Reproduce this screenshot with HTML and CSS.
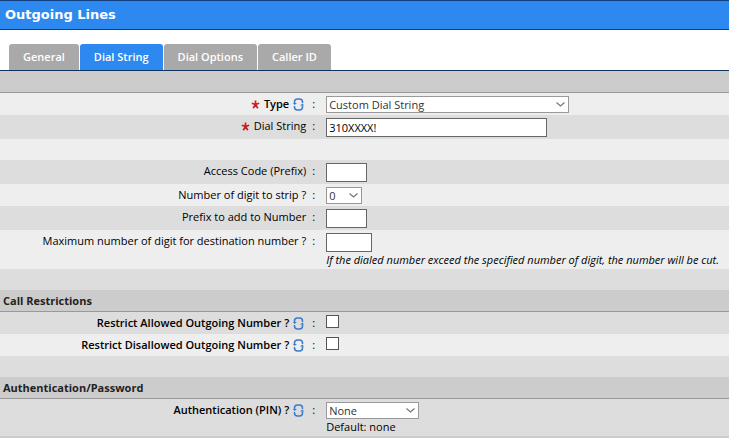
FILE: index.html
```html
<!DOCTYPE html>
<html lang="en">

<head>
  <meta charset="UTF-8">
  <title>Outgoing Lines</title>
  <link rel="stylesheet" href="styles.css">
</head>

<body>
  <svg class="defs" width="0" height="0">
    <symbol id="inherit" viewBox="0 0 12 13">
      <path d="M1.5 5.500V4Q1.500 1 4.500 1H6.500Q9.500 1 9.500 4V5M9.500 7.500V9Q9.500 12 6.500 12H4.500Q1.500 12 1.500 9V8" fill="none" stroke="#3b7bc8" stroke-width="1.5"/>
      <path d="M0 5h4L1.500 7zM7 7.500h4L9.500 5.500z" fill="#3b7bc8"/>
    </symbol>
    <symbol id="star" viewBox="0 0 9 9">
      <path d="M4.5 4.5V0.5M4.5 4.5L0.8 3.3M4.5 4.5L8.2 3.3M4.5 4.5L2.2 8.2M4.5 4.5L6.8 8.2" fill="none" stroke="#d01c1c" stroke-width="1.7"/>
    </symbol>
    <symbol id="arrow" viewBox="0 0 9 5">
      <path d="M0.5 0.5l4 3.5 4-3.5" fill="none" stroke="#777" stroke-width="1.2"/>
    </symbol>
  </svg>

  <h1 class="title">Outgoing Lines</h1>

  <nav class="tabs">
    <a class="tab" href="#general">General</a>
    <a class="tab active" href="#dialstring">Dial String</a>
    <a class="tab" href="#dialoptions">Dial Options</a>
    <a class="tab" href="#callerid">Caller ID</a>
  </nav>

  <form class="settings">
    <div class="group"></div>
    <div class="row light">
      <label class="name bold" for="type"><svg class="star"><use href="#star"/></svg>Type<svg class="inherit"><use href="#inherit"/></svg></label>
      <span class="colon">:</span>
      <div class="field">
        <span class="select wide">
          <select id="type"><option>Custom Dial String</option></select>
          <svg class="arrow"><use href="#arrow"/></svg>
        </span>
      </div>
    </div>
    <div class="row tall">
      <label class="name" for="dial"><svg class="star"><use href="#star"/></svg>Dial String</label>
      <span class="colon">:</span>
      <div class="field"><input class="text long" id="dial" type="text" value="310XXXX!"></div>
    </div>
    <div class="row light blank"></div>
    <div class="row tall">
      <label class="name" for="access">Access Code (Prefix)</label>
      <span class="colon">:</span>
      <div class="field"><input class="text short" id="access" type="text"></div>
    </div>
    <div class="row light">
      <label class="name" for="strip">Number of digit to strip ?</label>
      <span class="colon">:</span>
      <div class="field">
        <span class="select small">
          <select id="strip"><option>0</option></select>
          <svg class="arrow"><use href="#arrow"/></svg>
        </span>
      </div>
    </div>
    <div class="row tall">
      <label class="name" for="prefix">Prefix to add to Number</label>
      <span class="colon">:</span>
      <div class="field"><input class="text short" id="prefix" type="text"></div>
    </div>
    <div class="row light tall">
      <label class="name" for="max">Maximum number of digit for destination number ?</label>
      <span class="colon">:</span>
      <div class="field">
        <input class="text medium" id="max" type="text">
        <p class="hint">If the dialed number exceed the specified number of digit, the number will be cut.</p>
      </div>
    </div>
    <div class="row blank"></div>

    <h2 class="group">Call Restrictions</h2>
    <div class="row">
      <label class="name bold" for="allowed">Restrict Allowed Outgoing Number ?<svg class="inherit"><use href="#inherit"/></svg></label>
      <span class="colon">:</span>
      <div class="field"><input class="check" id="allowed" type="checkbox"></div>
    </div>
    <div class="row light">
      <label class="name bold" for="disallowed">Restrict Disallowed Outgoing Number ?<svg class="inherit"><use href="#inherit"/></svg></label>
      <span class="colon">:</span>
      <div class="field"><input class="check" id="disallowed" type="checkbox"></div>
    </div>
    <div class="row blank"></div>

    <h2 class="group">Authentication/Password</h2>
    <div class="row">
      <label class="name bold" for="pin">Authentication (PIN) ?<svg class="inherit"><use href="#inherit"/></svg></label>
      <span class="colon">:</span>
      <div class="field">
        <span class="select mid">
          <select id="pin"><option>None</option></select>
          <svg class="arrow"><use href="#arrow"/></svg>
        </span>
        <p class="default">Default: none</p>
      </div>
    </div>
  </form>
</body>

</html>
```
FILE: styles.css
```css
* {
  box-sizing: border-box;
}

body {
  margin: 0;
  background-color: white;
  color: black;
  font-family: "Open Sans", "Noto Sans", sans-serif;
  font-size: 11px;
  line-height: 16px;
}

.defs {
  position: absolute;
}

.title {
  margin: 0;
  padding: 0 5px;
  border-top: 1px solid #0f3f80;
  border-bottom: 1px solid #0f3f80;
  background-color: #2d89ef;
  color: white;
  font-family: "DejaVu Sans", Verdana, sans-serif;
  font-size: 13px;
  line-height: 28px;
}

.tabs {
  display: flex;
  gap: 1px;
  padding: 14px 9px 0;
  border-bottom: 1px solid #0f3460;
}

.tab {
  padding: 0 14px;
  border-radius: 3px 3px 0 0;
  background-color: #a9a9a9;
  color: white;
  font-weight: 600;
  line-height: 26px;
  text-decoration: none;
}

.tab.active {
  background-color: #2d89ef;
}

.group {
  height: 22px;
  margin: 0;
  padding: 0 3px;
  border-bottom: 1px solid #999;
  background-color: #ccc;
  color: #222;
  font-size: 11px;
  line-height: 22px;
}

.settings {
  border-bottom: 2px solid #ccc;
}

.row {
  display: grid;
  grid-template-columns: 42% 20px 1fr;
  min-height: 22px;
  padding: 3px 0 1px;
  background-color: #ddd;
}

.row.tall {
  min-height: 24px;
}

.row.light {
  background-color: #eee;
}

.row.blank {
  min-height: 21px;
  padding: 0;
}

.name {
  display: flex;
  justify-content: flex-end;
  align-items: center;
  gap: 4px;
  height: 16px;
}

.bold {
  font-weight: 600;
}

.colon {
  padding-left: 6px;
}

.star {
  width: 9px;
  height: 9px;
}

.inherit {
  width: 12px;
  height: 13px;
  margin-right: 1px;
}

.field {
  display: flex;
  flex-direction: column;
  align-items: flex-start;
}

.text {
  height: 19px;
  padding: 0 2px;
  border: 1px solid #666;
  background-color: white;
  font: inherit;
}

.long {
  width: 221px;
}

.medium {
  width: 46px;
}

.short {
  width: 41px;
}

.select {
  display: flex;
  position: relative;
}

.select select {
  width: 100%;
  height: 17px;
  padding: 0 2px;
  border: 1px solid #999;
  border-radius: 0;
  background-color: white;
  color: #333;
  font: inherit;
  appearance: none;
}

.wide {
  width: 243px;
}

.mid {
  width: 93px;
}

.small {
  width: 36px;
}

.arrow {
  position: absolute;
  top: 6px;
  right: 4px;
  width: 9px;
  height: 5px;
  pointer-events: none;
}

.check {
  width: 13px;
  height: 13px;
  margin: 0;
  border: 1px solid #555;
  background-color: white;
  appearance: none;
}

.check:checked {
  background-color: #2d89ef;
}

.hint,
.default {
  margin: 0;
}

.hint {
  font-style: italic;
}
```
